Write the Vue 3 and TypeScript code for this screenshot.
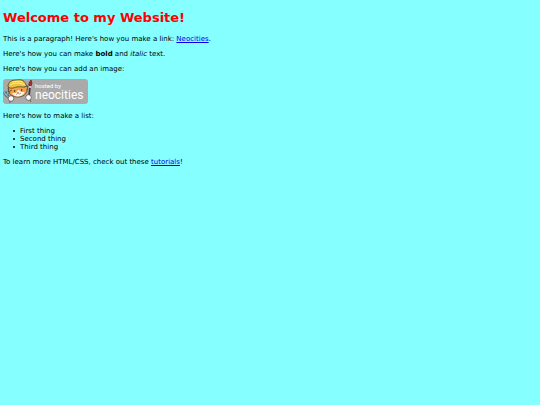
<script setup lang="ts">
const things: string[] = ['First thing', 'Second thing', 'Third thing']
</script>

<template>
  <main class="page">
    <h1>Welcome to my Website!</h1>

    <p>This is a paragraph! Here's how you make a link: <a href="https://neocities.org">Neocities</a>.</p>

    <p>Here's how you can make <strong>bold</strong> and <em>italic</em> text.</p>

    <p>Here's how you can add an image:</p>

    <svg class="badge" viewBox="0 0 85 25" role="img" aria-label="hosted by neocities">
      <rect width="85" height="25" rx="3" fill="#aaa" />
      <!-- cat -->
      <g stroke="#42342b" stroke-width="0.7" stroke-linejoin="round">
        <path d="M7 7 L5 9 L6 12 C6 16 10 18 15 18 C20 18 24 15 24 11 L24 7 L21 6Z" fill="#f3a04b" />
        <path d="M15 11 L13 14 L9 14 C10 16 12 17.5 15 17.4 C19 17.2 21 15 21.5 13 L18 13 L16 11Z" fill="#fff5e5" stroke="none" />
        <path d="M5 8 C5 3 8 1 14 1 C19 0 22 2 23 6 L25 8 C22 9 18 7 14 8 C10 9 8 10 5 8Z" fill="#e9c53e" />
        <path d="M7 6 C10 4 17 3 22 6 M9 3 C13 2 17 2 20 3" fill="none" stroke="#fff08b" stroke-width="1" />
        <path d="M6 9 L5 13 L9 11 M21 8 L25 7 L24 11" fill="#f3a04b" />
      </g>
      <path d="M11 12 h1.2 M18 11 h1.2" stroke="#33251d" stroke-width="1.4" />
      <path d="M14 13 l2 0 l-1 1z" fill="#a34b38" />
      <path d="M13 15 q1 1 2-1 q1 2 3 0" fill="none" stroke="#77513a" stroke-width="0.5" />
      <!-- wrench -->
      <path d="M1 13 L3 16 L7 19 M3 16 L5 14 L4 12" fill="none" stroke="#435159" stroke-width="2.6" />
      <path d="M1 13 L3 16 L7 19 M3 16 L5 14 L4 12" fill="none" stroke="#8fb4c6" stroke-width="1.4" />
      <!-- brush -->
      <path d="M26 17 L27 8" stroke="#4c3932" stroke-width="1.8" />
      <path d="M26 7 Q25 4 28 1 Q30 4 28 7Z" fill="#ac3134" stroke="#49302f" stroke-width="0.7" />
      <path d="M26 8 l2 0" stroke="#e5e5dc" stroke-width="1.4" />
      <!-- paws -->
      <circle cx="8" cy="19.5" r="2.8" fill="#fff" stroke="#504941" stroke-width="0.7" />
      <circle cx="25.5" cy="18.5" r="2.8" fill="#fff" stroke="#504941" stroke-width="0.7" />
      <path d="M7 22 v2 M27 21 l1 2" stroke="#665f58" stroke-width="1" />
      <text class="hosted" x="32" y="9">hosted by</text>
      <text class="brand" x="32" y="20">neocities</text>
    </svg>

    <p>Here's how to make a list:</p>

    <ul>
      <li v-for="thing in things" :key="thing">{{ thing }}</li>
    </ul>

    <p>To learn more HTML/CSS, check out these <a href="https://neocities.org/tutorials">tutorials</a>!</p>
  </main>
</template>

<style>
body {
  background: #85ffff;
}
</style>

<style scoped>
.page {
  padding: 1px 3px;
  color: #000;
  font-family: "DejaVu Sans", Verdana, sans-serif;
  font-size: 7px;
  line-height: 8px;
}

h1 {
  margin: 9px 0;
  color: #f00;
  font-size: 13px;
  line-height: 16px;
}

p {
  margin: 7px 0;
}

a {
  color: #00e;
  text-decoration: underline;
}

.badge {
  display: block;
  width: 85px;
  height: 25px;
  margin: -1px 0 8px;
}

.badge text {
  fill: #fff;
}

.hosted {
  font: 6px Roboto, sans-serif;
}

.brand {
  font: 12px Roboto, sans-serif;
}

ul {
  margin: 7px 0;
  padding-left: 10px;
  list-style: none;
}

li {
  display: flex;
  align-items: center;
  gap: 5px;
}

li::before {
  width: 2px;
  height: 2px;
  border-radius: 50%;
  background: #000;
  content: "";
}
</style>
